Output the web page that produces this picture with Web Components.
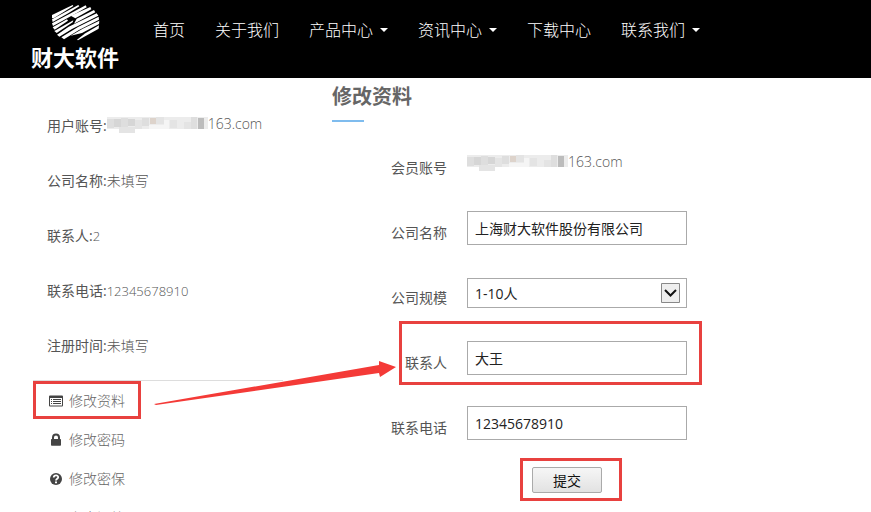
<!DOCTYPE html>
<html lang="zh-CN">
<head>
<meta charset="utf-8">
<meta name="viewport" content="width=device-width, initial-scale=1">
<title>修改资料</title>
<style>
body {
    margin: 0;
    background: #fff;
    color: #555;
    font-family: "Open Sans", "Noto Sans CJK SC", sans-serif;
    font-size: 14px;
}
</style>
</head>
<body>

<profile-page></profile-page>

<script>
function makeTemplate(html) {
  const template = document.createElement("template");
  template.innerHTML = html;
  return template;
}

class BaseElement extends HTMLElement {
  constructor() {
    super();
    this.attachShadow({ mode: "open" });
    this.shadowRoot.append(this.constructor.template.content.cloneNode(true));
  }
}

// logo
class SiteLogo extends BaseElement {
  static template = makeTemplate(`
<style>
:host {
    display: block;
}

a {
    display: flex;
    flex-direction: column;
    align-items: center;
    color: #fff;
    font-size: 22px;
    font-weight: bold;
    line-height: 32px;
    text-decoration: none;
}

svg {
    display: block;
    width: 50px;
    height: 38px;
}
</style>

<a href="#">
    <svg viewBox="66 8 150 114" fill="#fff" aria-hidden="true">
        <path d="M72 44 L134 14 L136 17 L78 53 L72 54Z"/>
        <path d="M72 57 L151 14 L154 18 L118 40 L74 65Z"/>
        <path d="M72 69 L173 15 L176 21 L146 38 L75 77Z"/>
        <path d="M74 81 L117 57 L120 61 L80 88Z"/>
        <path d="M128 46 L187 20 L190 27 L142 54Z"/>
        <path d="M79 92 L136 60 L134 66 L86 98Z"/>
        <path d="M146 55 L198 29 L202 36 L138 70Z"/>
        <path d="M87 103 L122 79 L206 39 L211 46 L132 86 L94 109Z"/>
        <path d="M100 111 L150 80 L212 49 L213 58 L153 89 L108 117Z"/>
        <path d="M128 106 L164 85 L214 61 L213 71 L162 98Z"/>
        <path d="M147 118 L172 99 L213 75 L212 85 L150 120Z"/>
    </svg>
    <span>财大软件</span>
</a>
`);
}

// one entry of the top navigation
class NavItem extends BaseElement {
  static template = makeTemplate(`
<style>
:host {
    display: block;
}

a {
    display: flex;
    align-items: center;
    gap: 7px;
    color: #fff;
    font-size: 16px;
    font-weight: 300;
    line-height: 22px;
    text-decoration: none;
    white-space: nowrap;
}

a::after {
    border: 4px solid transparent;
    border-top-color: #fff;
    border-bottom: 0;
}

:host([dropdown]) a::after {
    content: "";
}
</style>

<a href="#"><slot></slot></a>
`);
}

class SiteHeader extends BaseElement {
  static template = makeTemplate(`
<style>
:host {
    display: block;
    background: #000;
}

header {
    display: flex;
    gap: 34px;
    min-height: 75px;
    padding: 3px 31px 0;
}

nav {
    display: flex;
    gap: 30px;
    padding-top: 16px;
}
</style>

<header>
    <site-logo></site-logo>
    <nav>
        <nav-item>首页</nav-item>
        <nav-item>关于我们</nav-item>
        <nav-item dropdown>产品中心</nav-item>
        <nav-item dropdown>资讯中心</nav-item>
        <nav-item>下载中心</nav-item>
        <nav-item dropdown>联系我们</nav-item>
    </nav>
</header>
`);
}

// mail address with the name part covered by a mosaic
class MaskedMail extends BaseElement {
  static template = makeTemplate(`
<style>
:host {
    display: inline-flex;
    align-items: center;
    font-weight: 300;
}

svg {
    width: 101px;
    height: 18px;
}
</style>

<svg viewBox="0 0 101 18" shape-rendering="crispEdges" aria-hidden="true">
    <path fill="#ececec" d="M0 2h101v12H0z"/>
    <path fill="#dedede" d="M0 4h7v9H0zM14 3h7v11h-7zM35 3h7v8h-7zM84 2h6v12h-6z"/>
    <path fill="#d6d6d6" d="M7 4h7v8H7zM21 4h7v7h-7z"/>
    <path fill="#e4e4e4" d="M12 12h16v6H12zM28 5h7v9h-7zM49 2h8v7h-8zM63 5h7v8h-7zM77 7h7v7h-7z"/>
    <path fill="#ddd3cb" d="M43 3h6v6h-6z"/>
    <path fill="#f5f5f5" d="M42 10h15v4H42zM57 5h5v9h-5z"/>
    <path fill="#bcbcbc" d="M91 3h6v11h-6z"/>
</svg>
<span><slot></slot></span>
`);
}

class InfoRow extends BaseElement {
  static template = makeTemplate(`
<style>
:host {
    display: flex;
    align-items: center;
    height: 55px;
    line-height: 20px;
}

.value {
    font-weight: 300;
}

:host([number]) .value {
    font-size: 13px;
}
</style>

<span class="name"></span>
<span class="value"><slot></slot></span>
`);

  connectedCallback() {
    this.shadowRoot.querySelector(".name").innerText =
      this.getAttribute("name") + ":";
  }
}

class MenuItem extends BaseElement {
  static template = makeTemplate(`
<style>
:host {
    display: block;
}

a {
    display: flex;
    align-items: center;
    gap: 6px;
    height: 39px;
    color: #666;
    font-weight: 300;
    line-height: 20px;
    text-decoration: none;
}

::slotted(svg) {
    width: 14px;
    height: 14px;
    fill: #444;
}
</style>

<a href="#"><slot name="icon"></slot><slot></slot></a>
`);
}

class SideBar extends BaseElement {
  static template = makeTemplate(`
<style>
:host {
    display: block;
}

.info {
    padding: 20px 14px 7px;
    border-bottom: 1px solid #ddd;
}

nav {
    padding: 0 16px;
}
</style>

<div class="info">
    <info-row name="用户账号"><masked-mail>163.com</masked-mail></info-row>
    <info-row name="公司名称">未填写</info-row>
    <info-row name="联系人" number>2</info-row>
    <info-row name="联系电话" number>12345678910</info-row>
    <info-row name="注册时间">未填写</info-row>
</div>
<nav>
    <menu-item>
        <svg slot="icon" viewBox="0 0 14 14" aria-hidden="true"><path fill-rule="evenodd" d="M1 1.500h12a1 1 0 0 1 1 1v9a1 1 0 0 1-1 1H1a1 1 0 0 1-1-1v-9a1 1 0 0 1 1-1zM1 4v7.500h12V4zM2 5h1v1H2zM4 5h8v1H4zM2 7h1v1H2zM4 7h8v1H4zM2 9h1v1H2zM4 9h8v1H4z"/></svg>
        修改资料
    </menu-item>
    <menu-item>
        <svg slot="icon" viewBox="0 0 14 14" aria-hidden="true"><path fill-rule="evenodd" d="M3 6V4.500a4 4 0 0 1 8 0V6h.3a.7.7 0 0 1 .7.700v5.300a.8.8 0 0 1-.8.800H2.800a.8.8 0 0 1-.8-.800V6.700A.7.7 0 0 1 2.700 6zM5 6h4V4.500a2 2 0 0 0-4 0z"/></svg>
        修改密码
    </menu-item>
    <menu-item>
        <svg slot="icon" viewBox="0 0 14 14" aria-hidden="true"><circle cx="7" cy="7" r="6"/><path fill="none" stroke="#fff" stroke-width="1.800" d="M4.700 5.500C4.900 2.700 9.300 2.900 9.200 5.200 9.100 6.800 7 6.600 7 8.600"/><path fill="#fff" d="M6 9.500h2v1.700H6z"/></svg>
        修改密保
    </menu-item>
    <menu-item>
        <svg slot="icon" viewBox="0 0 14 14" aria-hidden="true"><path d="M2 3h10v9H2z"/></svg>
        安全问答
    </menu-item>
</nav>
`);
}

// label on the left, control on the right
const fieldStyle = `
:host {
    display: grid;
    grid-template-columns: 115px minmax(0, 220px);
    column-gap: 20px;
    align-items: start;
    min-height: 65px;
}

label, .label {
    padding-top: 12px;
    line-height: 20px;
    text-align: right;
}

input, select {
    box-sizing: border-box;
    width: 100%;
    margin: 0;
    padding: 0 7px;
    border: 1px solid #aaa;
    border-radius: 0;
    background: #fff;
    color: #222;
    font: inherit;
}

input {
    height: 34px;
}
`;

class TextField extends BaseElement {
  static template = makeTemplate(`
<style>${fieldStyle}</style>

<label for="control"></label>
<input id="control" type="text">
`);

  connectedCallback() {
    this.shadowRoot.querySelector("label").innerText =
      this.getAttribute("label");
    this.shadowRoot.querySelector("input").value = this.getAttribute("value");
  }
}

class SizeField extends BaseElement {
  static template = makeTemplate(`
<style>
${fieldStyle}

.box {
    position: relative;
    padding-top: 2px;
}

select {
    display: block;
    height: 30px;
    appearance: none;
}

svg {
    position: absolute;
    top: 7px;
    right: 7px;
    width: 19px;
    height: 20px;
    pointer-events: none;
}
</style>

<label for="control">公司规模</label>
<div class="box">
    <select id="control">
        <option>1-10人</option>
        <option>11-50人</option>
        <option>51-100人</option>
    </select>
    <svg viewBox="0 0 19 20" aria-hidden="true">
        <path fill="#eee" stroke="#888" d="M.5.500h18v19H.500z"/>
        <path fill="none" stroke="#111" stroke-width="2" d="M4 7l5.500 5.500L15 7"/>
    </svg>
</div>
`);
}

class StaticField extends BaseElement {
  static template = makeTemplate(`
<style>
${fieldStyle}

.value {
    padding-top: 6px;
    line-height: 20px;
}
</style>

<span class="label"></span>
<span class="value"><slot></slot></span>
`);

  connectedCallback() {
    this.shadowRoot.querySelector(".label").innerText =
      this.getAttribute("label");
  }
}

class ProfileForm extends BaseElement {
  static template = makeTemplate(`
<style>
:host {
    display: block;
}

h2 {
    margin: 0;
    padding-top: 4px;
    color: #666;
    font-size: 20px;
    line-height: 30px;
}

h2::after {
    content: "";
    display: block;
    width: 32px;
    height: 2px;
    margin-top: 8px;
    background: #7fbcee;
}

form {
    padding-top: 24px;
}

button {
    display: block;
    width: 70px;
    height: 26px;
    margin: -4px 0 0 200px;
    padding: 0;
    border: 1px solid #aaa;
    border-radius: 2px;
    background: linear-gradient(#f6f6f6, #e2e2e2);
    color: #111;
    font: inherit;
}
</style>

<h2>修改资料</h2>
<form>
    <static-field label="会员账号"><masked-mail>163.com</masked-mail></static-field>
    <text-field label="公司名称" value="上海财大软件股份有限公司"></text-field>
    <size-field></size-field>
    <text-field label="联系人" value="大王"></text-field>
    <text-field label="联系电话" value="12345678910"></text-field>
    <button type="submit">提交</button>
</form>
`);

  connectedCallback() {
    this.shadowRoot
      .querySelector("form")
      .addEventListener("submit", (e) => e.preventDefault());
  }
}

// red frames and arrow that lie over the page
class GuideMarks extends BaseElement {
  static template = makeTemplate(`
<style>
:host {
    position: absolute;
    top: 0;
    left: 0;
    pointer-events: none;
}

svg {
    display: block;
}
</style>

<svg width="710" height="510" aria-hidden="true">
    <g fill="none" stroke="#e8413f" stroke-width="3">
        <path d="M34.500 382.500h105v35h-105z"/>
        <path d="M400.500 322.500h300v61h-300z"/>
        <path d="M521.500 459.500h99v40h-99z"/>
    </g>
    <path fill="#f43a37" d="M154 404L379 365V361L396 367 380 377 379 373 156 405Z"/>
</svg>
`);
}

class ProfilePage extends BaseElement {
  static template = makeTemplate(`
<style>
:host {
    display: block;
    position: relative;
    height: 100vh;
    overflow: auto;
    scrollbar-width: none;
}

main {
    display: grid;
    grid-template-columns: 250px minmax(0, 1fr);
    column-gap: 49px;
    padding: 0 33px;
}
</style>

<site-header></site-header>
<main>
    <side-bar></side-bar>
    <profile-form></profile-form>
</main>
<guide-marks></guide-marks>
`);
}

window.customElements.define("site-logo", SiteLogo);
window.customElements.define("nav-item", NavItem);
window.customElements.define("site-header", SiteHeader);
window.customElements.define("masked-mail", MaskedMail);
window.customElements.define("info-row", InfoRow);
window.customElements.define("menu-item", MenuItem);
window.customElements.define("side-bar", SideBar);
window.customElements.define("text-field", TextField);
window.customElements.define("size-field", SizeField);
window.customElements.define("static-field", StaticField);
window.customElements.define("profile-form", ProfileForm);
window.customElements.define("guide-marks", GuideMarks);
window.customElements.define("profile-page", ProfilePage);
</script>
</body>
</html>
